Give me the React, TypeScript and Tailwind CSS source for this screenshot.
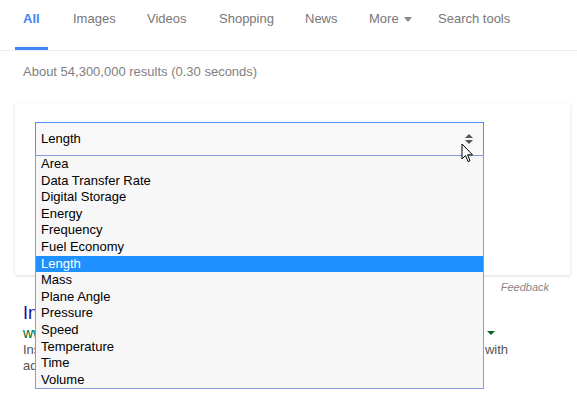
const tabs = [
  { label: 'All', w: 'w-[50px]', active: true },
  { label: 'Images', w: 'w-[74px]' },
  { label: 'Videos', w: 'w-[72px]' },
  { label: 'Shopping', w: 'w-[86px]' },
  { label: 'News', w: 'w-[64px]' },
  { label: 'More', w: 'w-[69px]', caret: true },
  { label: 'Search tools', w: 'w-[100px]' },
];

const units = [
  'Area',
  'Data Transfer Rate',
  'Digital Storage',
  'Energy',
  'Frequency',
  'Fuel Economy',
  'Length',
  'Mass',
  'Plane Angle',
  'Pressure',
  'Speed',
  'Temperature',
  'Time',
  'Volume',
];

function Cursor() {
  return (
    <svg width="13" height="21" viewBox="0 0 13 21" className="absolute left-[461px] top-[143px]">
      <path
        d="M1 1 L1 16 L4.5 12.5 L7 18.5 L9 17.7 L6.6 11.8 L11.5 11.8 Z"
        fill="#fff"
        stroke="#000"
        strokeWidth="1"
        strokeLinejoin="miter"
      />
    </svg>
  );
}

export default function App() {
  return (
    <div className="relative h-[400px] w-[577px] overflow-hidden bg-white font-['Liberation_Sans',Arial,sans-serif]">
      {/* tabs */}
      <div className="flex h-[51px] border-b border-[#ebebeb] pl-[15px] text-[13px]">
        {tabs.map((t) => (
          <div key={t.label} className={`${t.w} flex h-full shrink-0`}>
            <div
              className={`flex h-full items-start px-2 pt-[11px] ${
                t.active ? 'border-b-[3px] border-[#4285f4] font-bold text-[#4285f4]' : 'text-[#777]'
              }`}
            >
              <span className="leading-[16px]">{t.label}</span>
              {t.caret && (
                <span className="ml-[5px] mt-[6px] h-0 w-0 border-x-[4px] border-t-[5px] border-x-transparent border-t-[#888]" />
              )}
            </div>
          </div>
        ))}
      </div>

      {/* stats */}
      <div className="pl-[23px] pt-[13px] text-[13px] leading-[16px] text-[#808080]">
        About 54,300,000 results (0.30 seconds)
      </div>

      {/* converter card */}
      <div className="ml-[15px] mt-[23px] h-[172px] w-[555px] bg-white px-[20px] pt-[19px] shadow-[0_1px_3px_rgba(0,0,0,0.14)]">
        <div className="flex h-[34px] w-[449px] items-center justify-between border border-[#4d90fe] bg-[#f8f8f8] pl-[5px] pr-[10px] text-[13px] text-black">
          <span>Length</span>
          <span className="flex flex-col items-center gap-[2px]">
            <span className="h-0 w-0 border-x-[4px] border-b-[4px] border-x-transparent border-b-[#555]" />
            <span className="h-0 w-0 border-x-[4px] border-t-[4px] border-x-transparent border-t-[#555]" />
          </span>
        </div>
      </div>

      <div className="flex w-[549px] justify-end pt-[5px] text-[11px] italic leading-[14px] text-[#878787]">
        Feedback
      </div>

      {/* result behind dropdown */}
      <div className="pl-[23px] pt-[8px]">
        <div className="text-[18px] leading-[22px] text-[#1a0dab]">Inch to Centimeter Conversion Calculator</div>
        <div className="flex w-[472px] items-center justify-between text-[14px] leading-[18px] text-[#006621]">
          <span>www.unitconverters.net/length-converter.html</span>
          <span className="h-0 w-0 border-x-[4px] border-t-[4px] border-x-transparent border-t-[#006621]" />
        </div>
        <div className="w-[485px] text-[13px] leading-[16px] text-[#545454]">
          <div className="flex justify-between">
            <span>Instant free online tool for length conversion, or choose a unit to start</span>
            <span>with</span>
          </div>
          <div>additional tables and formulas for each conversion.</div>
        </div>
      </div>

      {/* open dropdown */}
      <div className="absolute left-[35px] top-[155px] w-[449px] border border-[#809ed8] bg-[#f7f7f7] text-[13px] text-black">
        {units.map((u) => (
          <div
            key={u}
            className={`h-[16.6px] pl-[5px] leading-[16.6px] ${u === 'Length' ? 'bg-[#1e90ff] text-white' : ''}`}
          >
            {u}
          </div>
        ))}
      </div>

      <Cursor />
    </div>
  );
}
